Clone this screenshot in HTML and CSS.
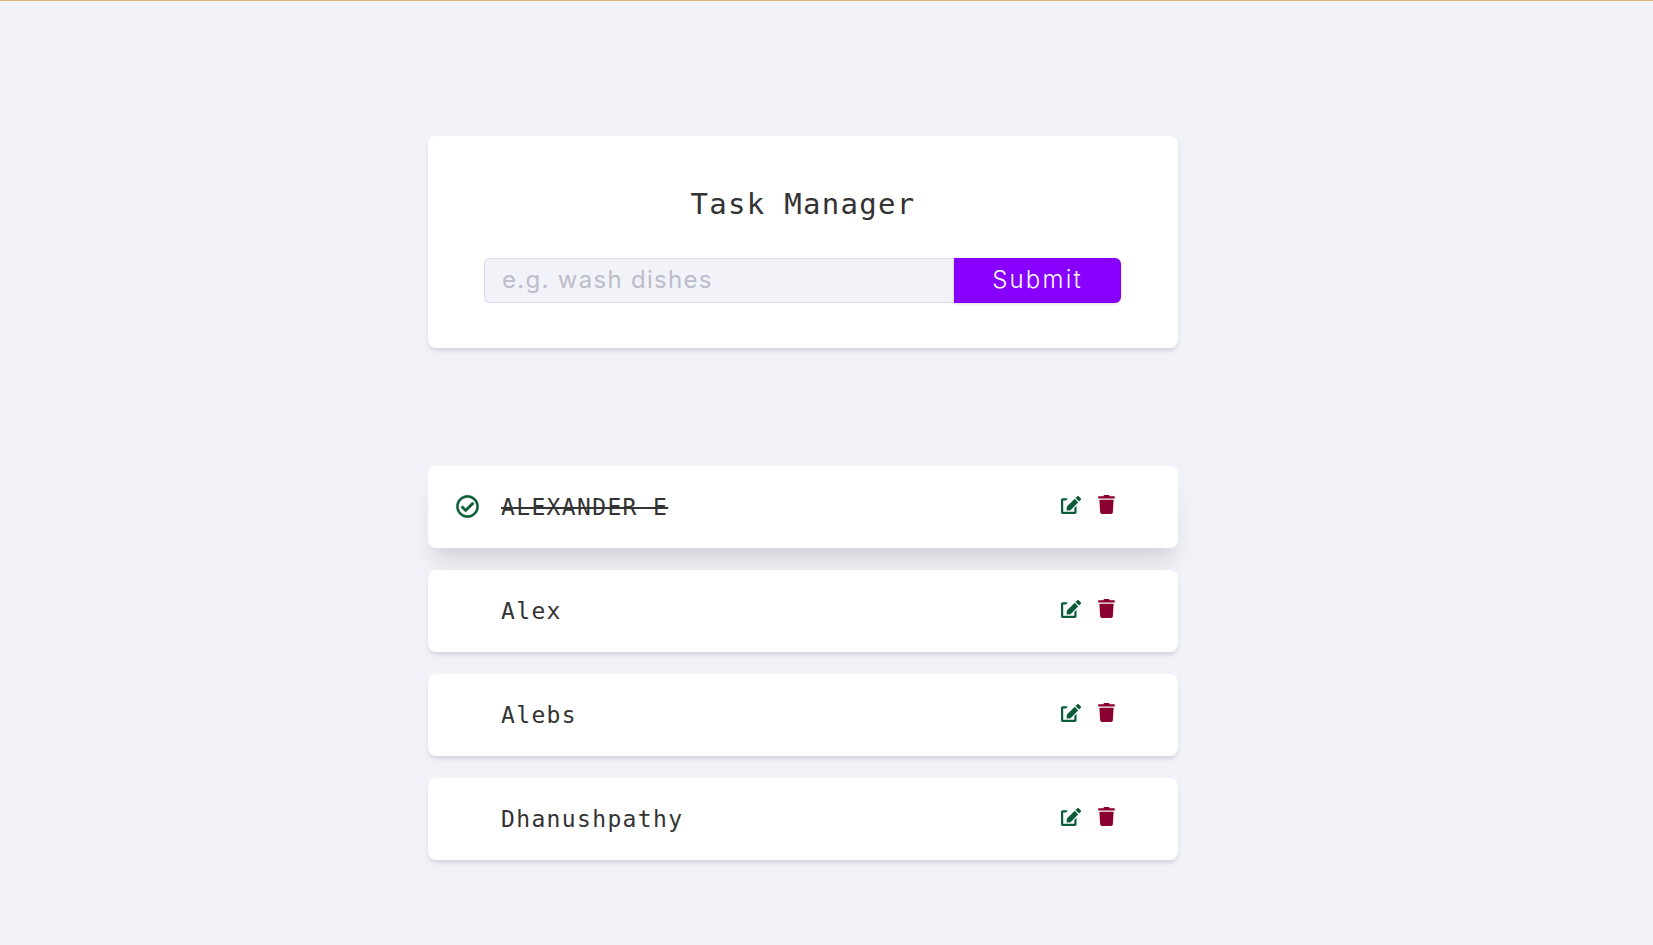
FILE: index.html
```html
<!DOCTYPE html>
<html>
<head lang="en">
    <meta charset="UTF-8">
    <title>Task Manager</title>
    <link rel="stylesheet" href="styles.css">
</head>
<body>
<main class="page">
    <form class="task-form">
        <h4 class="title">Task Manager</h4>
        <div class="form-control">
            <input class="task-input" type="text" placeholder="e.g. wash dishes">
            <button class="submit-btn" type="button">Submit</button>
        </div>
    </form>
    <section class="tasks">
        <div class="task task-hover">
            <svg class="check" viewBox="0 0 512 512"><path d="M256 8C119.033 8 8 119.033 8 256s111.033 248 248 248 248-111.033 248-248S392.967 8 256 8zm0 48c110.532 0 200 89.451 200 200 0 110.532-89.451 200-200 200-110.532 0-200-89.451-200-200 0-110.532 89.451-200 200-200m140.204 130.267l-22.536-22.718c-4.667-4.705-12.265-4.736-16.97-.068L215.346 303.697l-59.792-60.277c-4.667-4.705-12.265-4.736-16.97-.069l-22.719 22.536c-4.705 4.667-4.736 12.265-.068 16.971l90.781 91.516c4.667 4.705 12.265 4.736 16.97.068l172.589-171.204c4.704-4.668 4.734-12.266.067-16.971z"/></svg>
            <h5 class="task-name done">ALEXANDER E</h5>
            <div class="task-links">
                <svg class="edit" viewBox="0 0 576 512"><path d="M402.6 83.2l90.2 90.2c3.8 3.8 3.8 10 0 13.8L274.4 405.6l-92.8 10.3c-12.4 1.4-22.9-9.1-21.5-21.5l10.3-92.8L388.8 83.2c3.8-3.8 10-3.8 13.8 0zm162-22.9l-48.8-48.8c-15.2-15.2-39.9-15.2-55.2 0l-35.4 35.4c-3.8 3.8-3.8 10 0 13.8l90.2 90.2c3.8 3.8 10 3.8 13.8 0l35.4-35.4c15.2-15.3 15.2-40 0-55.2zM384 346.2V448H64V128h73.1c3.2 0 6.2-1.3 8.5-3.5l40-40c7.6-7.6 2.2-20.5-8.5-20.5H48C21.5 64 0 85.5 0 112v352c0 26.5 21.5 48 48 48h352c26.5 0 48-21.5 48-48V306.2c0-10.7-12.9-16-20.5-8.5l-40 40c-2.2 2.3-3.5 5.3-3.5 8.5z"/></svg>
                <svg class="trash" viewBox="0 0 448 512"><path d="M432 32H312l-9.4-18.7A24 24 0 0 0 281.1 0H166.8a23.72 23.72 0 0 0-21.4 13.3L136 32H16A16 16 0 0 0 0 48v32a16 16 0 0 0 16 16h416a16 16 0 0 0 16-16V48a16 16 0 0 0-16-16zM53.2 467a48 48 0 0 0 47.9 45h245.8a48 48 0 0 0 47.9-45L416 128H32z"/></svg>
            </div>
        </div>
        <div class="task">
            <h5 class="task-name">Alex</h5>
            <div class="task-links">
                <svg class="edit" viewBox="0 0 576 512"><path d="M402.6 83.2l90.2 90.2c3.8 3.8 3.8 10 0 13.8L274.4 405.6l-92.8 10.3c-12.4 1.4-22.9-9.1-21.5-21.5l10.3-92.8L388.8 83.2c3.8-3.8 10-3.8 13.8 0zm162-22.9l-48.8-48.8c-15.2-15.2-39.9-15.2-55.2 0l-35.4 35.4c-3.8 3.8-3.8 10 0 13.8l90.2 90.2c3.8 3.8 10 3.8 13.8 0l35.4-35.4c15.2-15.3 15.2-40 0-55.2zM384 346.2V448H64V128h73.1c3.2 0 6.2-1.3 8.5-3.5l40-40c7.6-7.6 2.2-20.5-8.5-20.5H48C21.5 64 0 85.5 0 112v352c0 26.5 21.5 48 48 48h352c26.5 0 48-21.5 48-48V306.2c0-10.7-12.9-16-20.5-8.5l-40 40c-2.2 2.3-3.5 5.3-3.5 8.5z"/></svg>
                <svg class="trash" viewBox="0 0 448 512"><path d="M432 32H312l-9.4-18.7A24 24 0 0 0 281.1 0H166.8a23.72 23.72 0 0 0-21.4 13.3L136 32H16A16 16 0 0 0 0 48v32a16 16 0 0 0 16 16h416a16 16 0 0 0 16-16V48a16 16 0 0 0-16-16zM53.2 467a48 48 0 0 0 47.9 45h245.8a48 48 0 0 0 47.9-45L416 128H32z"/></svg>
            </div>
        </div>
        <div class="task">
            <h5 class="task-name">Alebs</h5>
            <div class="task-links">
                <svg class="edit" viewBox="0 0 576 512"><path d="M402.6 83.2l90.2 90.2c3.8 3.8 3.8 10 0 13.8L274.4 405.6l-92.8 10.3c-12.4 1.4-22.9-9.1-21.5-21.5l10.3-92.8L388.8 83.2c3.8-3.8 10-3.8 13.8 0zm162-22.9l-48.8-48.8c-15.2-15.2-39.9-15.2-55.2 0l-35.4 35.4c-3.8 3.8-3.8 10 0 13.8l90.2 90.2c3.8 3.8 10 3.8 13.8 0l35.4-35.4c15.2-15.3 15.2-40 0-55.2zM384 346.2V448H64V128h73.1c3.2 0 6.2-1.3 8.5-3.5l40-40c7.6-7.6 2.2-20.5-8.5-20.5H48C21.5 64 0 85.5 0 112v352c0 26.5 21.5 48 48 48h352c26.5 0 48-21.5 48-48V306.2c0-10.7-12.9-16-20.5-8.5l-40 40c-2.2 2.3-3.5 5.3-3.5 8.5z"/></svg>
                <svg class="trash" viewBox="0 0 448 512"><path d="M432 32H312l-9.4-18.7A24 24 0 0 0 281.1 0H166.8a23.72 23.72 0 0 0-21.4 13.3L136 32H16A16 16 0 0 0 0 48v32a16 16 0 0 0 16 16h416a16 16 0 0 0 16-16V48a16 16 0 0 0-16-16zM53.2 467a48 48 0 0 0 47.9 45h245.8a48 48 0 0 0 47.9-45L416 128H32z"/></svg>
            </div>
        </div>
        <div class="task">
            <h5 class="task-name">Dhanushpathy</h5>
            <div class="task-links">
                <svg class="edit" viewBox="0 0 576 512"><path d="M402.6 83.2l90.2 90.2c3.8 3.8 3.8 10 0 13.8L274.4 405.6l-92.8 10.3c-12.4 1.4-22.9-9.1-21.5-21.5l10.3-92.8L388.8 83.2c3.8-3.8 10-3.8 13.8 0zm162-22.9l-48.8-48.8c-15.2-15.2-39.9-15.2-55.2 0l-35.4 35.4c-3.8 3.8-3.8 10 0 13.8l90.2 90.2c3.8 3.8 10 3.8 13.8 0l35.4-35.4c15.2-15.3 15.2-40 0-55.2zM384 346.2V448H64V128h73.1c3.2 0 6.2-1.3 8.5-3.5l40-40c7.6-7.6 2.2-20.5-8.5-20.5H48C21.5 64 0 85.5 0 112v352c0 26.5 21.5 48 48 48h352c26.5 0 48-21.5 48-48V306.2c0-10.7-12.9-16-20.5-8.5l-40 40c-2.2 2.3-3.5 5.3-3.5 8.5z"/></svg>
                <svg class="trash" viewBox="0 0 448 512"><path d="M432 32H312l-9.4-18.7A24 24 0 0 0 281.1 0H166.8a23.72 23.72 0 0 0-21.4 13.3L136 32H16A16 16 0 0 0 0 48v32a16 16 0 0 0 16 16h416a16 16 0 0 0 16-16V48a16 16 0 0 0-16-16zM53.2 467a48 48 0 0 0 47.9 45h245.8a48 48 0 0 0 47.9-45L416 128H32z"/></svg>
            </div>
        </div>
    </section>
</main>
</body>
</html>
```

FILE: styles.css
```css
* {
    margin: 0;
    padding: 0;
    box-sizing: border-box;
}

body {
    background: #f1f3f9;
    border-top: 1px solid #d9b77f;
    color: #333;
    font-family: "DejaVu Sans Mono", monospace;
    height: 945px;
    overflow: hidden;
}

.page {
    width: 750px;
    margin: 135px 0 0 428px;
}

.task-form {
    background: #fff;
    border-radius: 8px;
    box-shadow: 0 4px 6px -1px rgba(0, 0, 0, 0.1), 0 2px 4px -1px rgba(0, 0, 0, 0.06);
    padding: 50px 56px 45px;
    height: 212px;
}

.title {
    font-size: 29px;
    font-weight: 400;
    letter-spacing: 1.3px;
    line-height: 36px;
    text-align: center;
    margin-bottom: 36px;
}

.form-control {
    display: flex;
    height: 45px;
    padding-right: 1px;
}

.task-input {
    flex: 1;
    background: #f1f3f9;
    border: 1px solid #d9dcf0;
    border-right: none;
    border-radius: 6px 0 0 6px;
    padding: 0 17px 3px;
    font-family: "Inter", sans-serif;
    font-size: 24px;
    font-weight: 400;
    letter-spacing: 1.3px;
    outline: none;
}

.task-input::placeholder {
    color: #bcbcca;
    opacity: 1;
}

.submit-btn {
    width: 167px;
    background: #8800ff;
    border: none;
    border-radius: 0 6px 6px 0;
    box-shadow: 0 1px 3px rgba(0, 0, 0, 0.15);
    color: #fff;
    font-family: "Inter", sans-serif;
    font-size: 24px;
    font-weight: 300;
    letter-spacing: 2.2px;
    padding-bottom: 3px;
}

.tasks {
    margin-top: 118px;
    display: flex;
    flex-direction: column;
    gap: 22px;
}

.task {
    display: flex;
    align-items: center;
    position: relative;
    background: #fff;
    border-radius: 8px;
    box-shadow: 0 4px 6px -1px rgba(0, 0, 0, 0.1), 0 2px 4px -1px rgba(0, 0, 0, 0.06);
    height: 82px;
    padding-left: 73px;
}

.task-hover {
    box-shadow: 0 20px 25px -5px rgba(0, 0, 0, 0.1), 0 10px 10px -5px rgba(0, 0, 0, 0.04);
}

.check {
    position: absolute;
    left: 28px;
    top: 29px;
    width: 23px;
    height: 23px;
    fill: #0a5c36;
    stroke: #0a5c36;
    stroke-width: 10;
}

.task-name {
    flex: 1;
    font-size: 23px;
    font-weight: 400;
    letter-spacing: 1.35px;
}

.done {
    text-decoration: line-through;
}

.task-links {
    display: flex;
    align-items: center;
    gap: 17px;
    margin: -5px 63px 0 0;
}

.edit {
    width: 20px;
    height: 18px;
    fill: #0a5c36;
}

.trash {
    width: 17px;
    height: 19px;
    fill: #8b0030;
}
```
